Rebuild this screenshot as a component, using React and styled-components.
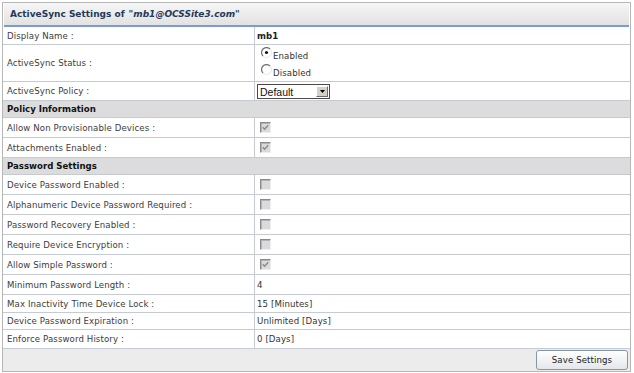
import React from "react";
import styled, { createGlobalStyle } from "styled-components";

const GlobalStyle = createGlobalStyle`
	html, body {
		margin: 0;
		padding: 0;
		background: #ffffff;
	}
	body {
		font-family: "DejaVu Sans", Verdana, sans-serif;
	}
`;

const Page = styled.div`
	padding: 2px 0 0 2px;
	width: 634px;
	height: 373px;
	box-sizing: border-box;
`;

const Panel = styled.div`
	width: 629px;
	border: 1px solid #b7b7b7;
	background: #ffffff;
	box-sizing: border-box;
`;

const TitleBar = styled.div`
	height: 22px;
	margin: 0 1px;
	padding-left: 6px;
	display: flex;
	align-items: center;
	background: linear-gradient(#f6f6f6, #e2e2e2);
	border-bottom: 2px solid #7d98de;
	font-size: 9px;
	font-weight: bold;
	color: #25395a;
`;

const Quoted = styled.i`
	margin-left: 4px;
`;

const Row = styled.div`
	display: grid;
	grid-template-columns: 252px 1fr;
	height: ${p => p.h}px;
	border-bottom: 1px solid #c6cad2;
	font-size: 8.6px;
	letter-spacing: 0.1px;
	color: #3d3b3d;
`;

const Label = styled.div`
	display: flex;
	align-items: center;
	padding-left: 4px;
	border-right: 1px solid #c6cad2;
`;

const Value = styled.div`
	display: flex;
	flex-direction: ${p => (p.column ? "column" : "row")};
	justify-content: ${p => (p.column ? "center" : "flex-start")};
	align-items: ${p => (p.column ? "flex-start" : "center")};
	padding-left: ${p => p.pad || 2}px;
	font-weight: ${p => (p.bold ? "bold" : "normal")};
	color: ${p => (p.bold ? "#1d1d1d" : "#333333")};
`;

const Section = styled.div`
	height: ${p => p.h}px;
	display: flex;
	align-items: center;
	padding-left: 4px;
	background: #dcdcdc;
	border-bottom: 1px solid #c6cad2;
	font-size: 8.6px;
	font-weight: bold;
	color: #111111;
`;

const RadioLine = styled.label`
	display: flex;
	align-items: flex-start;
	gap: 1px;
	height: 16px;
	padding-top: 1px;

	& span {
		padding-top: 4px;
	}
`;

const CheckBox = styled.span`
	display: inline-flex;
	width: 9px;
	height: 9px;
	margin-left: 3px;
	background: #dadada;
	border-top: 1px solid #8a8a8a;
	border-left: 1px solid #8a8a8a;
	border-right: 1px solid #efefef;
	border-bottom: 1px solid #efefef;
	box-shadow: inset 1px 1px 0 #b4b4b4;
	align-items: center;
	justify-content: center;
`;

const SelectBox = styled.div`
	display: flex;
	align-items: center;
	justify-content: space-between;
	width: 73px;
	height: 15px;
	margin-top: 1px;
	box-sizing: border-box;
	border: 1px solid #4a4a4a;
	padding-left: 2px;
	font-family: "Liberation Sans", Arial, sans-serif;
	font-size: 10.5px;
	letter-spacing: 0;
	color: #111111;
	background: #ffffff;
`;

const SelectArrow = styled.span`
	display: flex;
	align-items: center;
	justify-content: center;
	width: 12px;
	height: 11px;
	margin-right: 1px;
	background: #d4d0c8;
	border-top: 1px solid #ffffff;
	border-left: 1px solid #ffffff;
	border-right: 1px solid #6c6c6c;
	border-bottom: 1px solid #6c6c6c;
	box-sizing: border-box;
`;

const Footer = styled.div`
	height: 22px;
	display: flex;
	align-items: center;
	justify-content: flex-end;
	padding-right: 2px;
	background: #ececec;
`;

const SaveButton = styled.button`
	width: 92px;
	height: 20px;
	border: 1px solid #8796ad;
	border-radius: 3px;
	background: linear-gradient(#ffffff, #e4e6ea);
	font-family: "DejaVu Sans", Verdana, sans-serif;
	font-size: 8.6px;
	letter-spacing: 0.1px;
	color: #222222;
	cursor: pointer;
`;

const Radio = ({ checked }) => (
	<svg width="11" height="11" viewBox="0 0 11 11">
		<path d="M9 2 A4.5 4.5 0 1 0 2 9" fill="none" stroke="#707070" strokeWidth="1.2" />
		<path d="M9 2 A4.5 4.5 0 0 1 2 9" fill="none" stroke="#e6e6e6" strokeWidth="1" />
		{checked && <circle cx="5.5" cy="5.5" r="1.6" fill="#111" />}
	</svg>
);

const Check = ({ checked }) => (
	<CheckBox>
		{checked && (
			<svg width="7" height="7" viewBox="0 0 7 7">
				<path d="M0.8 3.2 L2.6 5.2 L6.2 1.2" fill="none" stroke="#8a8a8a" strokeWidth="1.4" />
			</svg>
		)}
	</CheckBox>
);

const Field = ({ label, h = 19, children, ...rest }) => (
	<Row h={h}>
		<Label>{label} :</Label>
		<Value {...rest}>{children}</Value>
	</Row>
);

const App = () => {
	return (
		<Page>
			<GlobalStyle />
			<Panel>
				<TitleBar>
					ActiveSync Settings of <Quoted>"mb1@OCSSite3.com"</Quoted>
				</TitleBar>

				<Field label="Display Name" h={17} bold>mb1</Field>
				<Field label="ActiveSync Status" h={36} column pad={6}>
					<RadioLine><Radio checked /><span>Enabled</span></RadioLine>
					<RadioLine><Radio /><span>Disabled</span></RadioLine>
				</Field>
				<Field label="ActiveSync Policy" h={18}>
					<SelectBox>
						Default
						<SelectArrow>
							<svg width="5" height="3" viewBox="0 0 5 3"><path d="M0 0 H5 L2.5 3 Z" fill="#000" /></svg>
						</SelectArrow>
					</SelectBox>
				</Field>

				<Section h={16}>Policy Information</Section>
				<Field label="Allow Non Provisionable Devices" h={19}><Check checked /></Field>
				<Field label="Attachments Enabled" h={19}><Check checked /></Field>

				<Section h={16}>Password Settings</Section>
				<Field label="Device Password Enabled" h={19}><Check /></Field>
				<Field label="Alphanumeric Device Password Required" h={19}><Check /></Field>
				<Field label="Password Recovery Enabled" h={19}><Check /></Field>
				<Field label="Require Device Encryption" h={19}><Check /></Field>
				<Field label="Allow Simple Password" h={19}><Check checked /></Field>
				<Field label="Minimum Password Length" h={19}>4</Field>
				<Field label="Max Inactivity Time Device Lock" h={17}>15 [Minutes]</Field>
				<Field label="Device Password Expiration" h={16}>Unlimited [Days]</Field>
				<Field label="Enforce Password History" h={18}>0 [Days]</Field>

				<Footer>
					<SaveButton>Save Settings</SaveButton>
				</Footer>
			</Panel>
		</Page>
	);
};

export default App;
